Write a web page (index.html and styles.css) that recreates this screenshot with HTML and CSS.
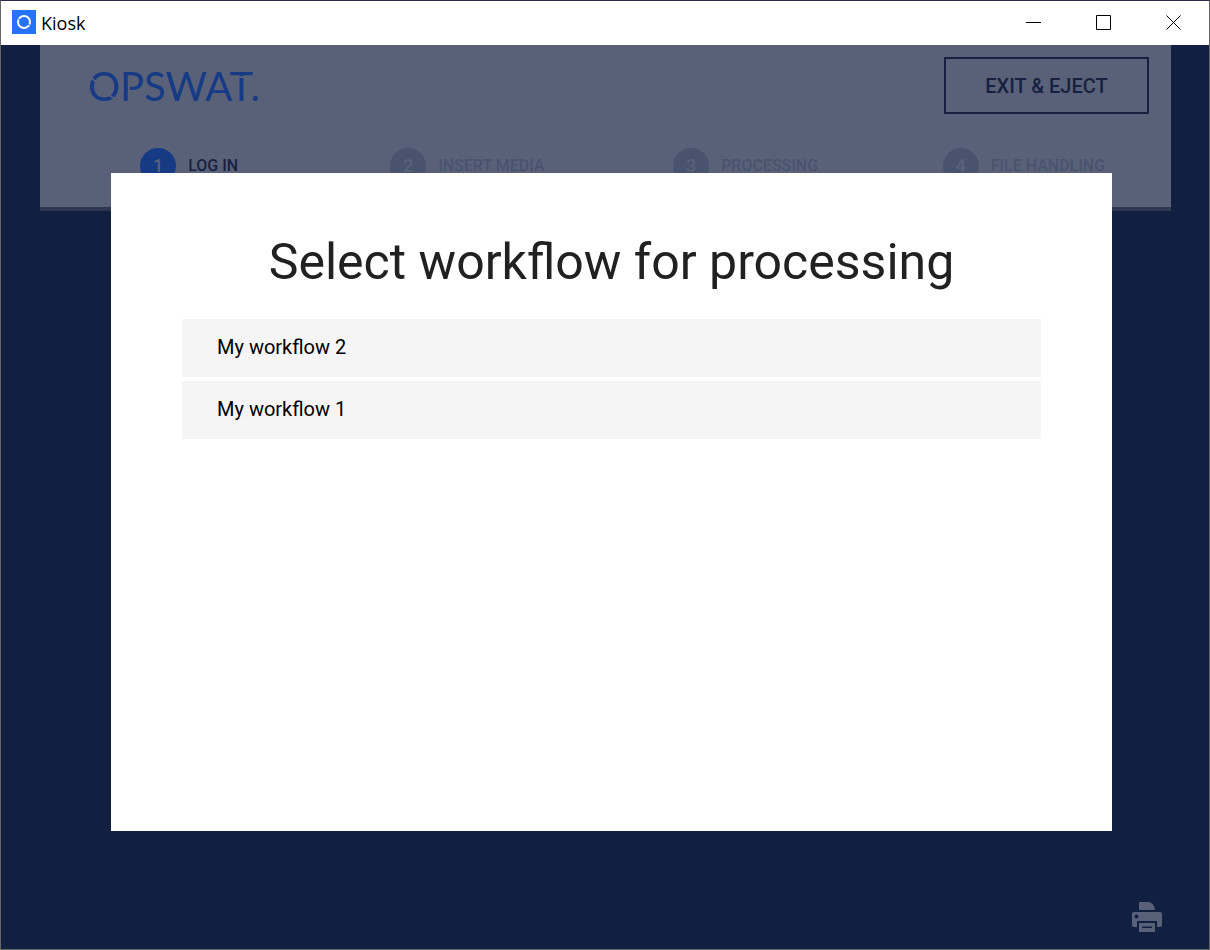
FILE: index.html
```html
<!DOCTYPE html>
<html lang="en">
<head>
    <meta charset="UTF-8">
    <meta name="viewport" content="width=device-width, initial-scale=1.0">
    <title>Kiosk</title>
    <link rel="stylesheet" href="styles.css">
</head>
<body>
    <div class="window">
        <!-- Title bar -->
        <div class="titlebar">
            <svg class="app-icon" viewBox="0 0 24 24" aria-hidden="true">
                <rect width="24" height="24" fill="#2672fb"/>
                <circle cx="12" cy="12" r="6" fill="none" stroke="#fff" stroke-width="2"/>
                <path d="M4 8l5 2M15 14l5 2" stroke="#2672fb" stroke-width="1"/>
            </svg>
            <span class="app-name">Kiosk</span>
            <div class="window-controls">
                <button type="button" aria-label="Minimize">
                    <svg viewBox="0 0 16 16"><path d="M0 7.5h15"/></svg>
                </button>
                <button type="button" aria-label="Maximize">
                    <svg viewBox="0 0 16 16"><path d="M.5.5h14v14H.5z"/></svg>
                </button>
                <button type="button" aria-label="Close">
                    <svg viewBox="0 0 16 16"><path d="M.5.5l14 14M14.5.5l-14 14"/></svg>
                </button>
            </div>
        </div>

        <div class="stage">
            <header class="kiosk-header">
                <div class="header-top">
                    <svg class="logo" viewBox="0 0 190 56" role="img" aria-label="OPSWAT.">
                        <text x="0" y="43">OPSWAT.</text>
                        <!-- stencil gaps in the wordmark -->
                        <path class="logo-cuts" d="M1 19l8 5M21 37l9 6M41 27v8M146 19h12"/>
                    </svg>
                    <button type="button" class="exit-button">EXIT &amp; EJECT</button>
                </div>
                <ol class="steps">
                    <li class="step active"><span class="step-number">1</span>LOG IN</li>
                    <li class="step"><span class="step-number">2</span>INSERT MEDIA</li>
                    <li class="step"><span class="step-number">3</span>PROCESSING</li>
                    <li class="step"><span class="step-number">4</span>FILE HANDLING</li>
                </ol>
            </header>

            <button type="button" class="print-button" aria-label="Print">
                <svg viewBox="0 0 30 30">
                    <path d="M7 0h10q5 1 6 8H7z"/>
                    <path fill-rule="evenodd" d="M2 10h26q2 0 2 2v11q0 2-2 2h-3v-6H5v6H2q-2 0-2-2V12q0-2 2-2zM4.500 12.500a2 2 0 1 0 .01 0z"/>
                    <path fill-rule="evenodd" d="M7 21h16v9H7zM10 24.500v1.500h10v-1.500z"/>
                </svg>
            </button>

            <!-- Workflow dialog -->
            <div class="overlay">
                <section class="dialog" role="dialog" aria-labelledby="dialog-title">
                    <h1 id="dialog-title">Select workflow for processing</h1>
                    <div class="workflow-list">
                        <button type="button" class="workflow">My workflow 2</button>
                        <button type="button" class="workflow">My workflow 1</button>
                    </div>
                </section>
            </div>
        </div>
    </div>
</body>
</html>
```
FILE: styles.css
```css
:root {
    --bg: #111f41;
    --panel: #596179;
    --panel-edge: #2e3851;
    --brand: #173a85;
    --ink: #17213f;
    --muted: #4a536d;
    --row: #f5f5f5;
}

* {
    box-sizing: border-box;
}

body {
    margin: 0;
    font-family: Roboto, "Liberation Sans", sans-serif;
}

button {
    font-family: inherit;
    border: none;
    background: none;
    padding: 0;
}

.window {
    display: flex;
    flex-direction: column;
    min-height: 100vh;
    border: 1px solid #666;
    border-top-color: #2f2c4a;
}

/* Title bar */
.titlebar {
    display: flex;
    align-items: center;
    height: 44px;
    padding-left: 11px;
    background-color: #fff;
}

.app-icon {
    width: 24px;
    height: 24px;
    margin-bottom: 2px;
}

.app-name {
    margin-left: 5px;
    font-family: "Open Sans", "Noto Sans", sans-serif;
    font-size: 18px;
    color: #000;
}

.window-controls {
    display: flex;
    margin-left: auto;
}

.window-controls button {
    display: flex;
    align-items: center;
    justify-content: center;
    width: 70px;
    height: 44px;
}

.window-controls svg {
    width: 16px;
    height: 16px;
    fill: none;
    stroke: #000;
    stroke-width: 1;
}

/* Kiosk screen */
.stage {
    position: relative;
    display: flex;
    flex-direction: column;
    flex: 1;
    background-color: var(--bg);
}

.kiosk-header {
    margin: 0 38px 0 39px;
    padding-bottom: 23px;
    background-color: var(--panel);
    border-bottom: 4px solid var(--panel-edge);
}

.header-top {
    display: flex;
    justify-content: space-between;
    align-items: center;
    padding: 12px 22px 0 48px;
}

.logo {
    width: 190px;
    height: 56px;
}

.logo text {
    font-family: Lato, sans-serif;
    font-size: 40px;
    fill: var(--brand);
}

.logo-cuts {
    stroke: var(--panel);
    stroke-width: 2;
}

.exit-button {
    width: 205px;
    height: 57px;
    border: 2px solid var(--ink);
    font-size: 20px;
    font-weight: 500;
    color: var(--ink);
}

.steps {
    display: grid;
    grid-template-columns: repeat(4, 1fr);
    margin: 34px 0 0;
    padding: 0 8px 0 10px;
    list-style: none;
}

.step {
    display: flex;
    align-items: center;
    justify-content: center;
    gap: 12px;
    font-size: 16px;
    font-weight: 500;
    line-height: 32px;
    color: var(--muted);
}

.step-number {
    display: flex;
    align-items: center;
    justify-content: center;
    width: 36px;
    height: 36px;
    border-radius: 50%;
    background-color: var(--muted);
    font-size: 18px;
    color: var(--panel);
}

.step.active {
    color: var(--ink);
}

.step.active .step-number {
    background-color: var(--brand);
}

.print-button {
    width: 30px;
    height: 30px;
    margin: auto 47px 17px auto;
}

.print-button svg {
    display: block;
    fill: var(--panel);
}

/* Dialog lies over the kiosk screen */
.overlay {
    position: absolute;
    inset: 0;
    display: flex;
    padding: 128px 97px 118px 110px;
}

.dialog {
    flex: 1;
    padding: 56px 71px;
    background-color: #fff;
}

.dialog h1 {
    margin: 0 0 24px;
    font-size: 50px;
    font-weight: 400;
    line-height: 66px;
    text-align: center;
    color: #212121;
}

.workflow-list {
    display: flex;
    flex-direction: column;
    gap: 4px;
}

.workflow {
    height: 58px;
    padding: 0 35px 2px;
    background-color: var(--row);
    font-size: 20px;
    text-align: left;
    color: #000;
}
```
